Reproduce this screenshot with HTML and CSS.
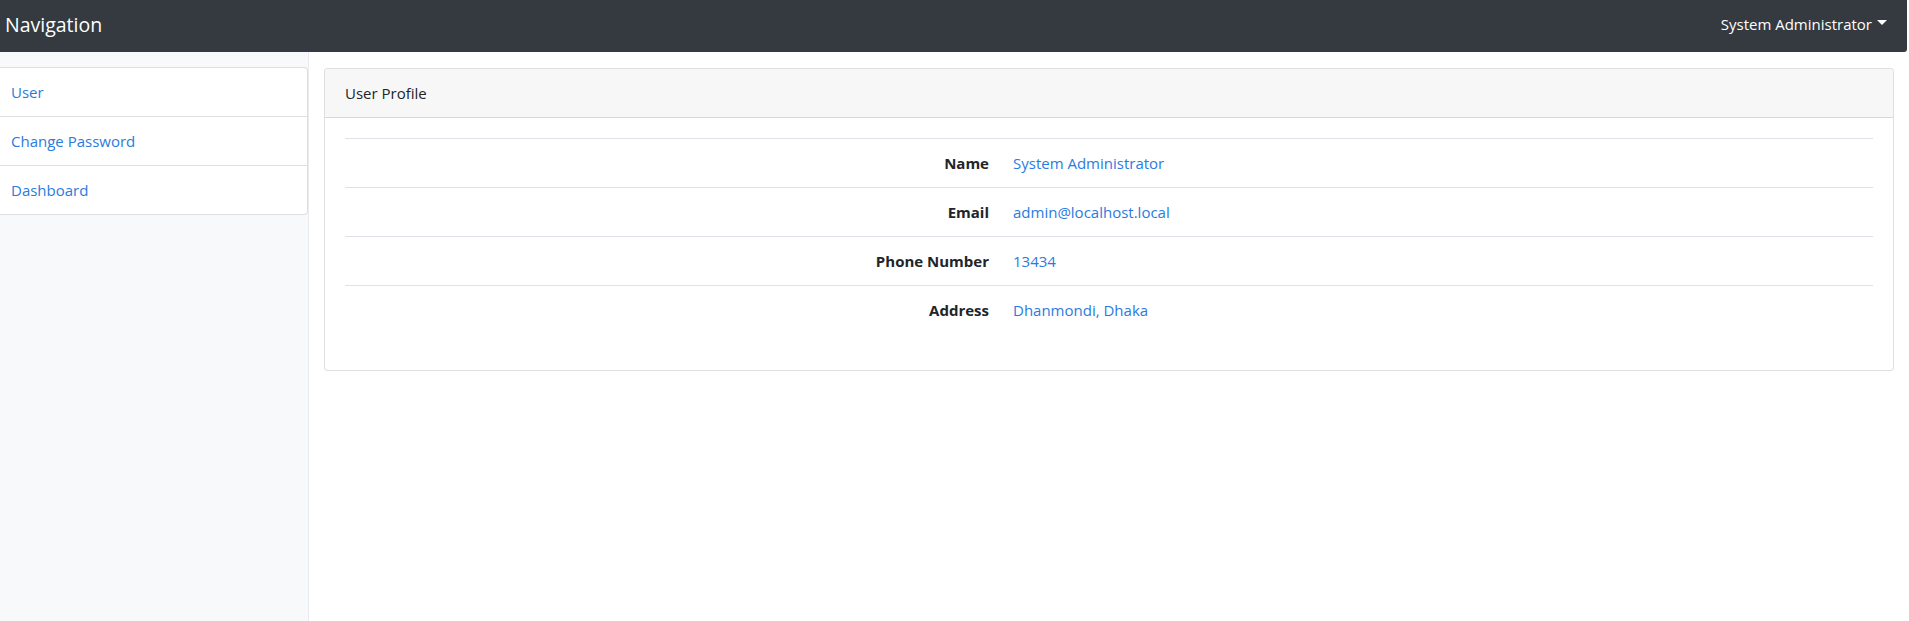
FILE: index.html
```html
<!DOCTYPE html>
<html lang="en">
<head>
<meta charset="utf-8">
<title>User Profile</title>
<link rel="stylesheet" href="styles.css">
</head>
<body>
<nav class="navbar">
  <a class="brand" href="#">Navigation</a>
  <a class="user-toggle" href="#">System Administrator<span class="caret"></span></a>
</nav>
<div class="layout">
  <aside class="sidebar">
    <ul class="list-group">
      <li class="list-item"><a href="#">User</a></li>
      <li class="list-item"><a href="#">Change Password</a></li>
      <li class="list-item"><a href="#">Dashboard</a></li>
    </ul>
  </aside>
  <main class="main">
    <section class="card">
      <header class="card-header">User Profile</header>
      <div class="card-body">
        <div class="profile">
          <div class="profile-row"><div class="label">Name</div><div class="value">System Administrator</div></div>
          <div class="profile-row"><div class="label">Email</div><div class="value">admin@localhost.local</div></div>
          <div class="profile-row"><div class="label">Phone Number</div><div class="value">13434</div></div>
          <div class="profile-row"><div class="label">Address</div><div class="value">Dhanmondi, Dhaka</div></div>
        </div>
      </div>
    </section>
  </main>
</div>
</body>
</html>
```

FILE: styles.css
```css
* { box-sizing: border-box; }
html, body { margin: 0; padding: 0; }
body {
  font-family: "Open Sans", "Noto Sans", sans-serif;
  font-size: 15px;
  line-height: 24px;
  color: #212529;
  background: #fff;
  overflow: hidden;
}
a { text-decoration: none; }

.navbar {
  display: flex;
  align-items: center;
  justify-content: space-between;
  height: 52px;
  width: 1907px;
  background: #343a40;
  border-bottom-right-radius: 3px;
  padding: 0 20px 0 5px;
}
.brand {
  color: #fff;
  font-size: 19.5px;
  line-height: 28px;
  padding-bottom: 3px;
}
.user-toggle {
  color: #fff;
  display: flex;
  align-items: center;
  padding-bottom: 4px;
}
.caret {
  display: inline-block;
  margin-left: 5px;
  width: 0;
  height: 0;
  border-top: 5px solid #fff;
  border-left: 5px solid transparent;
  border-right: 5px solid transparent;
  margin-top: -3px;
}

.layout {
  display: flex;
  min-height: calc(100vh - 52px);
}
.sidebar {
  width: 309px;
  flex: none;
  background: #f8f9fa;
  border-right: 1px solid #e9ebee;
  padding-top: 15px;
}
.list-group {
  list-style: none;
  margin: 0 0 0 -10px;
  padding: 0;
  width: 318px;
  background: #fff;
  border: 1px solid rgba(0,0,0,.125);
  border-radius: 4px;
}
.list-item {
  padding: 12px 20px;
  border-top: 1px solid rgba(0,0,0,.125);
}
.list-item:first-child { border-top: 0; }
.list-item a { color: #2a7be0; }

.main {
  flex: 1;
  padding: 16px 15px;
}
.card {
  border: 1px solid rgba(0,0,0,.125);
  border-radius: 4px;
  background: #fff;
}
.card-header {
  padding: 12px 20px;
  background: #f7f7f7;
  border-bottom: 1px solid rgba(0,0,0,.125);
  border-radius: 4px 4px 0 0;
  color: #212529;
}
.card-body {
  padding: 20px;
}
.profile {
  margin-bottom: 16px;
}
.profile-row {
  display: grid;
  grid-template-columns: 656px 1fr;
  border-top: 1px solid #dee2e6;
}
.label, .value {
  padding: 12px;
}
.label {
  font-weight: 700;
  text-align: right;
}
.value {
  color: #2a7be0;
}
```
